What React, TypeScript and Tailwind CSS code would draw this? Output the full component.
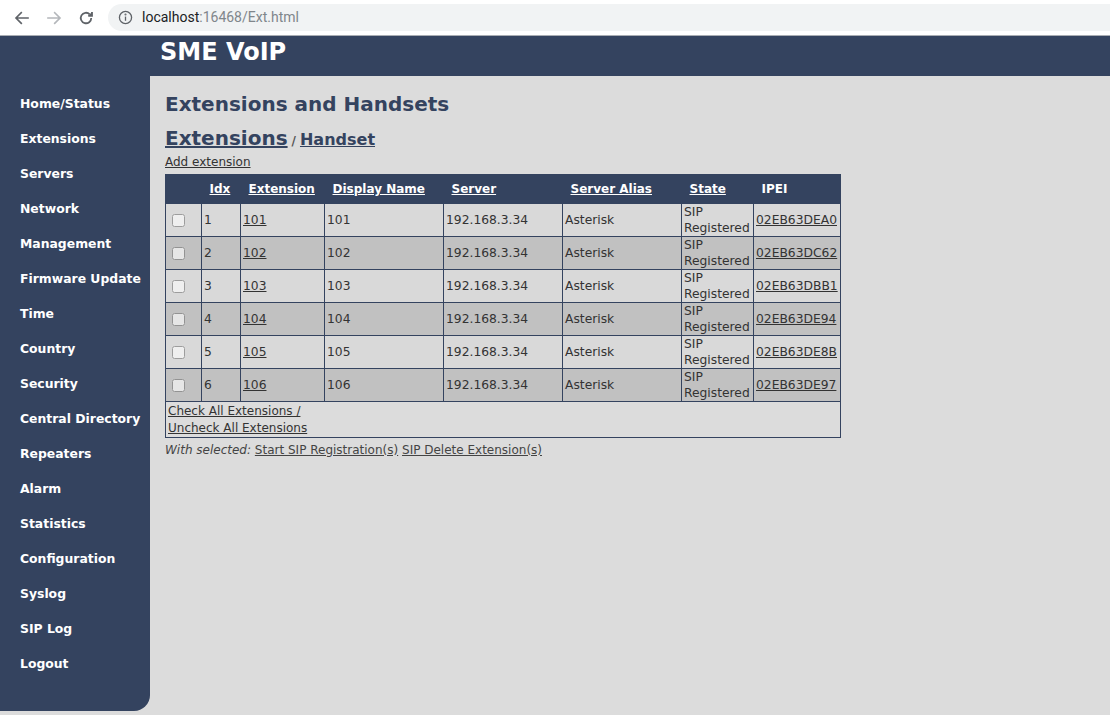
import React from "react";

const NAV = [
  "Home/Status",
  "Extensions",
  "Servers",
  "Network",
  "Management",
  "Firmware Update",
  "Time",
  "Country",
  "Security",
  "Central Directory",
  "Repeaters",
  "Alarm",
  "Statistics",
  "Configuration",
  "Syslog",
  "SIP Log",
  "Logout",
];

const ROWS = [
  { idx: 1, ext: "101", ipei: "02EB63DEA0" },
  { idx: 2, ext: "102", ipei: "02EB63DC62" },
  { idx: 3, ext: "103", ipei: "02EB63DBB1" },
  { idx: 4, ext: "104", ipei: "02EB63DE94" },
  { idx: 5, ext: "105", ipei: "02EB63DE8B" },
  { idx: 6, ext: "106", ipei: "02EB63DE97" },
];

const COLS: [string, number, boolean][] = [
  ["Idx", 39, true],
  ["Extension", 84, true],
  ["Display Name", 119, true],
  ["Server", 119, true],
  ["Server Alias", 119, true],
  ["State", 72, true],
  ["IPEI", 87, false],
];

const font = "font-['DejaVu_Sans',Verdana,sans-serif]";

export default function App() {
  return (
    <div className={`w-[1110px] h-[715px] bg-[#dcdcdc] overflow-hidden ${font}`}>
      {/* browser chrome */}
      <div className="h-[35px] bg-white flex items-center border-b border-[#a9adb3] box-content">
        <div className="flex items-center w-[108px] pl-[13px] gap-[14px]">
          <svg width="18" height="18" viewBox="0 0 24 24" fill="none" stroke="#5f6368" strokeWidth="2.2" strokeLinecap="square">
            <path d="M20 12H5M11 5l-7 7 7 7" />
          </svg>
          <svg width="18" height="18" viewBox="0 0 24 24" fill="none" stroke="#b4b7bb" strokeWidth="2.2" strokeLinecap="square">
            <path d="M4 12h15M13 5l7 7-7 7" />
          </svg>
          <svg width="18" height="18" viewBox="0 0 24 24" fill="none" stroke="#5f6368" strokeWidth="2.4">
            <path d="M19 12a7 7 0 1 1-2.05-4.95" />
            <path d="M20 4v5h-5" fill="#5f6368" strokeLinejoin="miter" />
          </svg>
        </div>
        <div className="flex-1 h-[27px] bg-[#f1f3f4] rounded-l-full flex items-center pl-[10px] font-['Roboto',sans-serif] text-[14px]">
          <svg width="15" height="15" viewBox="0 0 16 16" fill="none" stroke="#5f6368" strokeWidth="1.4">
            <circle cx="8" cy="8" r="6.5" />
            <path d="M8 7v4.5" />
            <circle cx="8" cy="4.8" r="0.4" fill="#5f6368" />
          </svg>
          <span className="ml-[9px] text-[#202124]">localhost</span>
          <span className="text-[#80868b]">:16468/Ext.html</span>
        </div>
      </div>

      {/* header */}
      <div className="h-[40px] bg-[#34435f] flex items-center pl-[160px] pb-[9px]">
        <span className="text-white font-bold text-[24px] leading-none">SME VoIP</span>
      </div>

      <div className="flex">
        {/* sidebar */}
        <div className="w-[150px] h-[635px] bg-[#34435f] rounded-br-[16px] pt-[11px] flex flex-col">
          {NAV.map((n) => (
            <div key={n} className="h-[35px] flex items-center pl-[20px] text-white font-bold text-[12.4px]">
              {n}
            </div>
          ))}
        </div>

        {/* content */}
        <div className="flex-1 pl-[15px] pt-[16px] text-[#333]">
          <div className="text-[#34435f] font-bold text-[20px] leading-[24px]">Extensions and Handsets</div>
          <div className="mt-[9px] flex items-baseline text-[#34435f] font-bold">
            <span className="text-[20px] leading-[26px] underline">Extensions</span>
            <span className="text-[12px] text-[#555] mx-[4px]">/</span>
            <span className="text-[16px] underline">Handset</span>
          </div>
          <div className="text-[12px] leading-[16px] underline text-[#333] mt-[2px]">Add extension</div>

          <table className="mt-[4px] w-[676px] table-fixed border-collapse border border-[#34435f] text-[12.3px] text-[#333]">
            <colgroup>
              <col style={{ width: 36 }} />
              {COLS.map(([t, w]) => (
                <col key={t} style={{ width: w }} />
              ))}
            </colgroup>
            <thead>
              <tr className="bg-[#34435f] text-white h-[29px]">
                <th></th>
                {COLS.map(([t, , u]) => (
                  <th
                    key={t}
                    className={`text-left pl-[8px] font-bold text-[12px] ${u ? "underline" : ""}`}
                  >
                    {t}
                  </th>
                ))}
              </tr>
            </thead>
            <tbody>
              {ROWS.map((r, i) => (
                <tr key={r.idx} className={`h-[33px] ${i % 2 === 0 ? "bg-[#d9d9d9]" : "bg-[#c1c1c1]"}`}>
                  <td className="border border-[#34435f] pl-[6px]">
                    <input type="checkbox" className="w-[13px] h-[13px] m-0 align-middle opacity-60" />
                  </td>
                  <td className="border border-[#34435f] pl-[2px]">{r.idx}</td>
                  <td className="border border-[#34435f] pl-[2px] underline">{r.ext}</td>
                  <td className="border border-[#34435f] pl-[2px]">{r.ext}</td>
                  <td className="border border-[#34435f] pl-[2px]">192.168.3.34</td>
                  <td className="border border-[#34435f] pl-[2px]">Asterisk</td>
                  <td className="border border-[#34435f] pl-[2px] leading-[16px]">
                    SIP
                    <br />
                    Registered
                  </td>
                  <td className="border border-[#34435f] pl-[2px] underline">{r.ipei}</td>
                </tr>
              ))}
              <tr>
                <td colSpan={8} className="border border-[#34435f] pl-[2px] pt-[1px] text-[12px] leading-[17px]">
                  <div className="underline">Check All Extensions /</div>
                  <div className="underline">Uncheck All Extensions</div>
                </td>
              </tr>
            </tbody>
          </table>
          <div className="mt-[4px] text-[12px] leading-[16px] text-[#444]">
            <span className="italic">With selected:</span>{" "}
            <span className="underline">Start SIP Registration(s)</span>{" "}
            <span className="underline">SIP Delete Extension(s)</span>
          </div>
        </div>
      </div>
    </div>
  );
}
